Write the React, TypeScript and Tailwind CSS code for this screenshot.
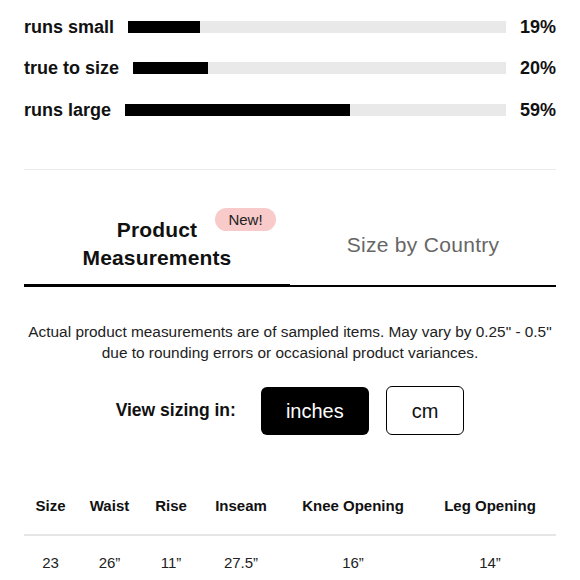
import React from "react";

const rows = [
  { label: "runs small", pct: 19 },
  { label: "true to size", pct: 20 },
  { label: "runs large", pct: 59 },
];

const cols = ["Size", "Waist", "Rise", "Inseam", "Knee Opening", "Leg Opening"];
const vals = ["23", "26\u201d", "11\u201d", "27.5\u201d", "16\u201d", "14\u201d"];

export default function App() {
  return (
    <div
      className="w-[580px] h-[580px] overflow-hidden bg-white px-6 text-[#111]"
      style={{ fontFamily: '"Liberation Sans", Arial, sans-serif' }}
    >
      <div className="pt-[6px]">
        {rows.map((r) => (
          <div key={r.label} className="flex h-[41.5px] items-center gap-[14px]">
            <span className="text-[18px] font-bold leading-none whitespace-nowrap">{r.label}</span>
            <div className="relative h-[12px] flex-1 bg-[#e9e9e9]">
              <div className="h-full bg-black" style={{ width: `${r.pct}%` }} />
            </div>
            <span className="w-[36px] text-right text-[18px] font-bold leading-none">{r.pct}%</span>
          </div>
        ))}
      </div>

      <div className="mt-[38.5px] h-px bg-[#ececec]" />

      <div className="mt-[33px] flex h-[84px]">
        <div className="relative flex flex-1 items-center justify-center border-b-[3px] border-black">
          <span className="text-center text-[21px] font-bold leading-[28px] tracking-[0.15px] text-[#111]">
            Product
            <br />
            Measurements
          </span>
          <span className="absolute left-[191px] top-[5px] flex h-[23px] w-[61px] items-center justify-center rounded-full bg-[#f9caca] text-[15px] leading-none text-[#222]">
            New!
          </span>
        </div>
        <div className="flex flex-1 items-center justify-center border-b-2 border-black">
          <span className="text-[21px] leading-none tracking-[0.3px] text-[#666]">Size by Country</span>
        </div>
      </div>

      <p className="mt-[34px] text-center text-[15.4px] leading-[21px] text-[#222]">
        Actual product measurements are of sampled items. May vary by 0.25" - 0.5"
        <br />
        due to rounding errors or occasional product variances.
      </p>

      <div className="mt-[23px] flex items-center justify-center">
        <span className="mr-[25px] text-[17.5px] font-bold text-[#111]">View sizing in:</span>
        <button className="h-[48px] rounded-[6px] bg-black px-[25px] text-[20px] text-white">inches</button>
        <button className="ml-[17px] h-[49px] rounded-[6px] border border-black bg-white px-[25px] text-[20px] text-[#111]">
          cm
        </button>
      </div>

      <div className="mt-[61px]">
        <div className="grid grid-cols-[53px_65px_58px_82px_142px_1fr] border-b-2 border-[#e6e6e6] pb-[18px]">
          {cols.map((c) => (
            <div key={c} className="text-center text-[15px] font-bold leading-[20px] text-[#111]">
              {c}
            </div>
          ))}
        </div>
        <div className="grid grid-cols-[53px_65px_58px_82px_142px_1fr] pt-[17px]">
          {vals.map((v, i) => (
            <div key={i} className="text-center text-[15px] leading-[20px] text-[#222]">
              {v}
            </div>
          ))}
        </div>
      </div>
    </div>
  );
}
